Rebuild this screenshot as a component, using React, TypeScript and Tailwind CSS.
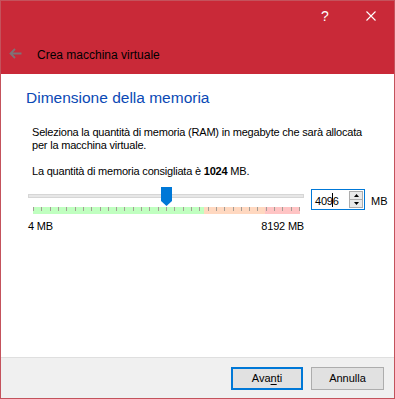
export default function App() {
  const ticks = Array.from({ length: 33 }, (_, i) => i);
  return (
    <div className="w-[395px] h-[399px] border border-[#c4525c] flex flex-col bg-white font-['Liberation_Sans',Arial,sans-serif] text-black overflow-hidden">
      <div className="h-[73px] bg-[#c92938] flex flex-col shrink-0">
        <div className="h-[29px] flex justify-end">
          <div className="w-[46px] flex items-center justify-center text-white text-[14px] leading-none">?</div>
          <div className="w-[46px] flex items-center justify-center">
            <svg width="10" height="10" viewBox="0 0 10 10">
              <path d="M0.5 0.5 L9.5 9.5 M9.5 0.5 L0.5 9.5" stroke="#ffffff" strokeWidth="1.1" fill="none" />
            </svg>
          </div>
        </div>
        <div className="mt-[17px] flex items-start h-[16px]">
          <svg className="ml-[8px] mt-[1px]" width="13" height="11" viewBox="0 0 13 11">
            <path d="M1.5 5.5 H12.5 M6 1 L1.5 5.5 L6 10" stroke="#7f7276" strokeWidth="1.8" fill="none" />
          </svg>
          <span className="ml-[15px] text-[12px] leading-[16px] text-black whitespace-nowrap">Crea macchina virtuale</span>
        </div>
      </div>

      <div className="flex-1 flex flex-col pt-[14px]">
        <h1 className="ml-[25px] text-[15.5px] leading-[20px] text-[#0a49b5] font-normal">Dimensione della memoria</h1>
        <div className="ml-[31px] mt-[18px] text-[11px] leading-[13px] tracking-[-0.2px] whitespace-nowrap">
          <p>
            Seleziona la quantità di memoria (RAM) in megabyte che sarà allocata
            <br />
            per la macchina virtuale.
          </p>
          <p className="mt-[13px]">
            La quantità di memoria consigliata è <b>1024</b> MB.
          </p>
        </div>

        <div className="mt-[9px] ml-[27px] flex items-start">
          <div className="w-[276px] relative">
            <svg className="absolute left-[133px] top-0" width="11" height="19" viewBox="0 0 11 19">
              <polygon points="0,0 11,0 11,14 5.5,19 0,14" fill="#0078d7" />
            </svg>
            <div className="mt-[7px] h-[4px] bg-[#e7e7e7] border border-[#d6d6d6]" />
            <div className="mt-[9px] ml-[5px] w-[267px] h-[7px] relative flex">
              <div className="w-[171px] bg-[#c0ffc0]" />
              <div className="w-[61px] bg-[#ffd8c0]" />
              <div className="w-[35px] bg-[#ffc4c4]" />
              <div className="absolute inset-x-0 top-0 h-[4px] flex justify-between">
                {ticks.map((i) => (
                  <div key={i} className="w-px h-[4px] bg-[#a49c94]" />
                ))}
              </div>
            </div>
            <div className="mt-[6px] flex justify-between text-[11px] leading-[13px] tracking-[-0.2px]">
              <span>4 MB</span>
              <span>8192 MB</span>
            </div>
          </div>

          <div className="ml-[7px] mt-[2px] flex items-start">
            <div className="w-[54px] h-[21px] border border-[#0078d7] bg-white flex items-start">
              <div className="flex-1 pl-[3px] pt-[5px] text-[11px] leading-[13px] tracking-[-0.2px]">
                409
                <span className="relative">
                  <span className="absolute left-[-0.5px] top-[-2px] w-px h-[14px] bg-black" />
                  6
                </span>
              </div>
              <div className="mt-[1px] mr-[1px] w-[14px] h-[17px] flex flex-col">
                <div className="h-[9px] border border-[#adadad] bg-[#e9e9e9] flex items-center justify-center">
                  <svg width="5" height="3" viewBox="0 0 5 3">
                    <polygon points="2.5,0 5,3 0,3" fill="#000" />
                  </svg>
                </div>
                <div className="h-[8px] border border-t-0 border-[#adadad] bg-[#e9e9e9] flex items-center justify-center">
                  <svg width="5" height="3" viewBox="0 0 5 3">
                    <polygon points="0,0 5,0 2.5,3" fill="#000" />
                  </svg>
                </div>
              </div>
            </div>
            <span className="ml-[6px] mt-[6px] text-[11px] leading-[13px]">MB</span>
          </div>
        </div>
      </div>

      <div className="h-[41px] border-t border-[#dfdfdf] bg-[#f0f0f0] flex justify-end items-start pt-[9px] pr-[10px] gap-[8px] shrink-0">
        <button className="w-[72px] h-[23px] border-2 border-[#0078d7] bg-[#e1e1e1] text-[11px] leading-[13px] flex items-center justify-center">
          <span>
            Ava<span className="underline underline-offset-[2px]">n</span>ti
          </span>
        </button>
        <button className="w-[73px] h-[23px] border border-[#adadad] bg-[#e1e1e1] text-[11px] leading-[13px] flex items-center justify-center">
          Annulla
        </button>
      </div>
    </div>
  );
}
